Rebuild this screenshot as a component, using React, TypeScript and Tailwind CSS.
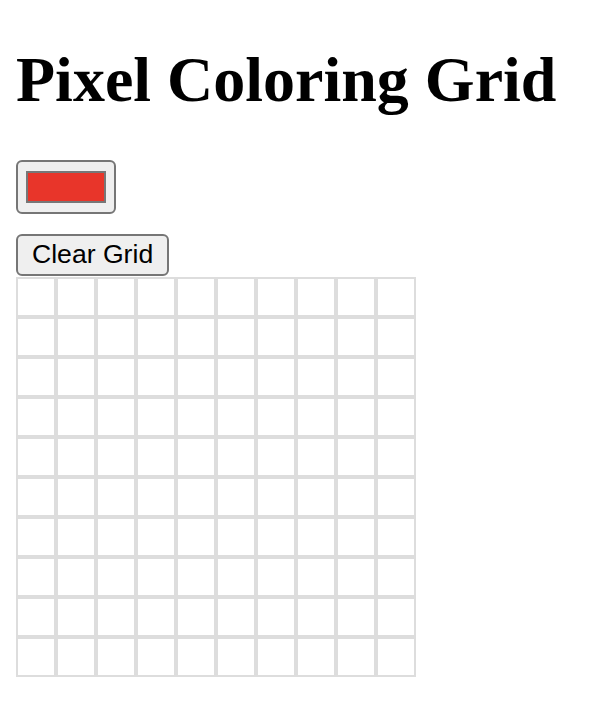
import { useState } from "react";

const SIZE = 10;

export default function App() {
  const [color, setColor] = useState("#e8352a");
  const [cells, setCells] = useState<string[]>(() => Array(SIZE * SIZE).fill(""));

  const paint = (i: number) => {
    setCells((prev) => prev.map((c, j) => (j === i ? color : c)));
  };

  return (
    <div className="px-4 pb-4 bg-white min-h-screen text-black">
      <h1 className="pt-[43px] mb-[43px] text-[64px] leading-[73.5px] font-bold font-['Liberation_Serif',serif]">
        Pixel Coloring Grid
      </h1>

      {/* Color picker */}
      <label className="relative block w-[100px] h-[54px] rounded-[6px] border-2 border-[#767676] bg-[#efefef] px-[8px] py-[9px] cursor-pointer">
        <div className="w-full h-full border-2 border-[#777]" style={{ background: color }} />
        <input
          type="color"
          value={color}
          onChange={(e) => setColor(e.target.value)}
          className="absolute inset-0 opacity-0 w-full h-full cursor-pointer"
        />
      </label>

      <button
        onClick={() => setCells(Array(SIZE * SIZE).fill(""))}
        className="mt-[20px] h-[42px] px-[14px] rounded-[6px] border-2 border-[#767676] bg-[#efefef] text-[26.6px] leading-none font-['Liberation_Sans',Arial,sans-serif] block"
      >
        Clear Grid
      </button>

      {/* Grid */}
      <div className="mt-px grid grid-cols-[repeat(10,40px)] w-[400px]">
        {cells.map((c, i) => (
          <div
            key={i}
            onClick={() => paint(i)}
            className="h-[40px] border-2 border-[#ddd] cursor-pointer"
            style={{ background: c || "#fff" }}
          />
        ))}
      </div>
    </div>
  );
}
